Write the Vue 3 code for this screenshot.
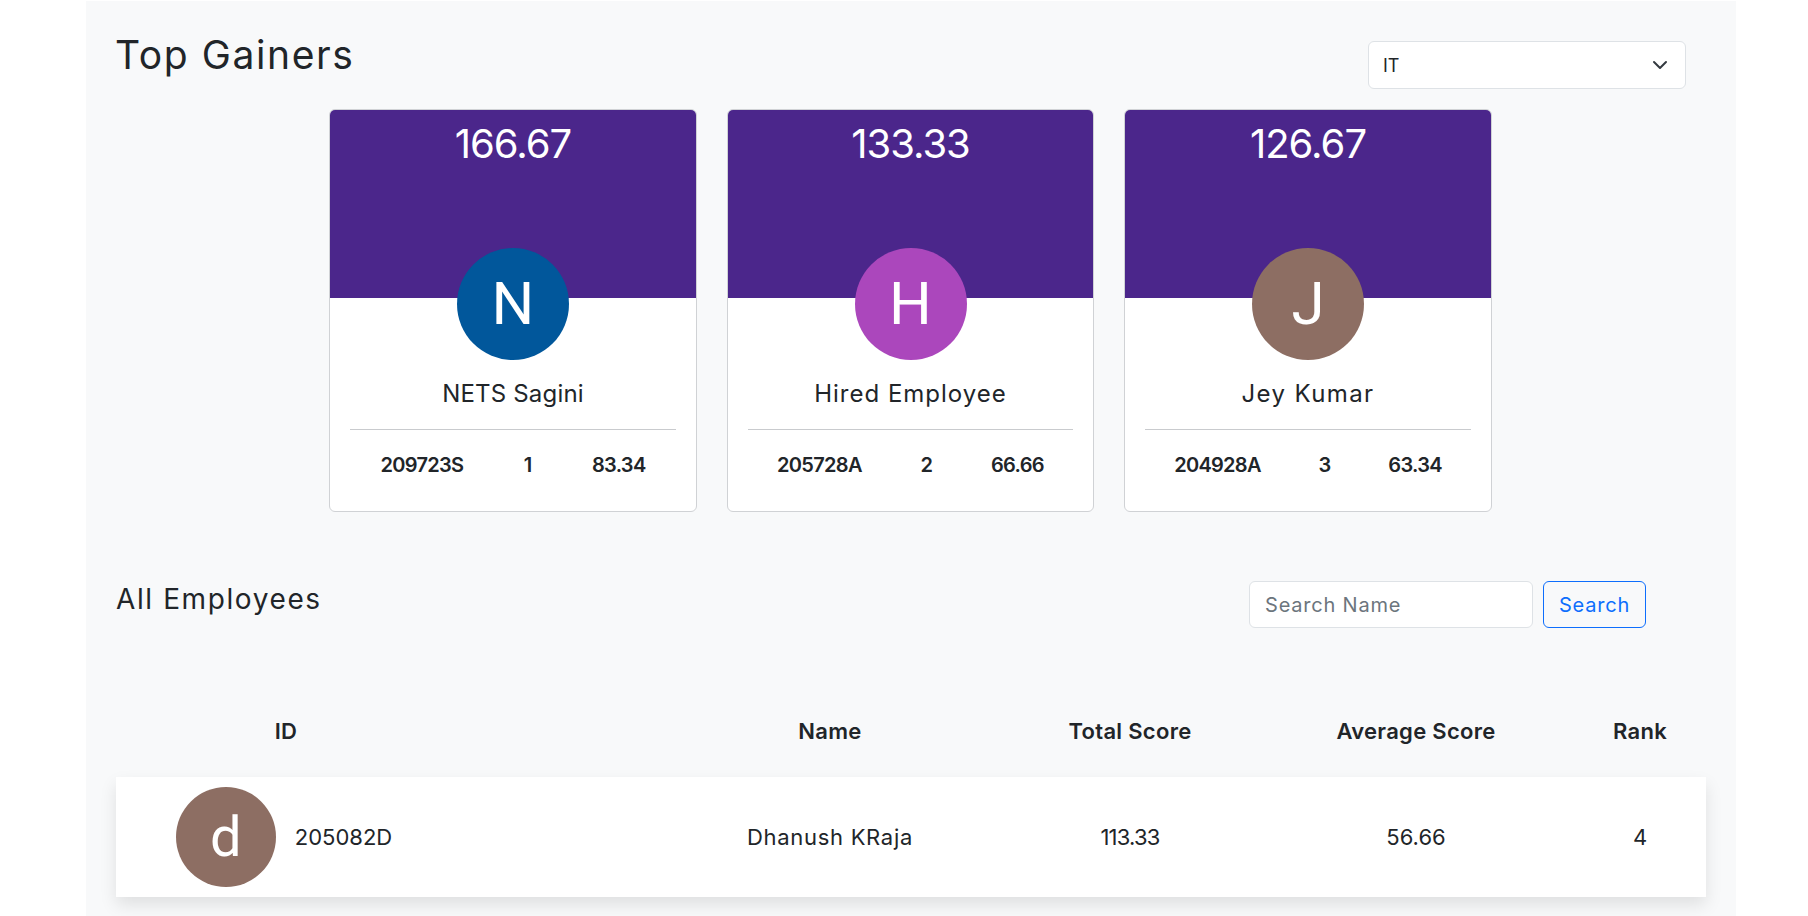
<script setup>
const gainers = [
  { score: '166.67', letter: 'N', color: '#01579b', name: 'NETS Sagini', id: '209723S', rank: 1, avg: '83.34' },
  { score: '133.33', letter: 'H', color: '#ab47bc', name: 'Hired Employee', id: '205728A', rank: 2, avg: '66.66' },
  { score: '126.67', letter: 'J', color: '#8d6e63', name: 'Jey Kumar', id: '204928A', rank: 3, avg: '63.34' },
]
</script>

<template>
  <main class="panel">
    <header class="top-head">
      <h1 class="title">Top Gainers</h1>
      <div class="select-wrap">
        <select class="select"><option>IT</option></select>
        <svg class="chev" viewBox="0 0 16 16" width="16" height="16" fill="none" stroke="#343a40" stroke-width="2" stroke-linecap="round" stroke-linejoin="round"><path d="m2 5 6 6 6-6" /></svg>
      </div>
    </header>

    <section class="cards">
      <article v-for="g in gainers" :key="g.id" class="card">
        <div class="card-top"><span class="score">{{ g.score }}</span></div>
        <div class="big-avatar" :style="{ background: g.color }">{{ g.letter }}</div>
        <div class="card-body">
          <div class="card-name">{{ g.name }}</div>
          <div class="stats">
            <span>{{ g.id }}</span>
            <span>{{ g.rank }}</span>
            <span>{{ g.avg }}</span>
          </div>
        </div>
      </article>
    </section>

    <section class="emp-head">
      <h2 class="subtitle">All Employees</h2>
      <form class="search" @submit.prevent>
        <input class="search-input" placeholder="Search Name" />
        <button class="search-btn" type="button">Search</button>
      </form>
    </section>

    <div class="grid thead">
      <div class="id-cell">ID</div>
      <div>Name</div>
      <div>Total Score</div>
      <div>Average Score</div>
      <div>Rank</div>
    </div>
    <div class="grid trow">
      <div class="id-cell person">
        <div class="small-avatar">d</div>
        <span>205082D</span>
      </div>
      <div class="emp-name">Dhanush KRaja</div>
      <div class="emp-total">113.33</div>
      <div>56.66</div>
      <div>4</div>
    </div>
  </main>
</template>

<style>
html, body { margin: 0; background: #fff; overflow: hidden; }
</style>

<style scoped>
.panel {
  box-sizing: border-box;
  width: 1650px;
  height: 915px;
  margin: 1px 0 0 86px;
  padding: 0 30px;
  background: #f8f9fa;
  color: #212529;
  font-family: Inter, "Open Sans", sans-serif;
  overflow: hidden;
}
.top-head {
  display: flex;
  justify-content: space-between;
  align-items: flex-start;
  height: 107.5px;
  padding-right: 20px;
}
.title {
  margin: 0 0 0 -1px;
  padding-top: 30px;
  font-size: 39px;
  line-height: 48px;
  font-weight: 400;
  letter-spacing: 1.6px;
}
.select-wrap { position: relative; margin-top: 40px; }
.select {
  display: block;
  box-sizing: border-box;
  width: 318px;
  height: 48px;
  padding: 0 14px;
  appearance: none;
  background: #fff;
  border: 1px solid #dee2e6;
  border-radius: 6px;
  font: 400 18px Inter, sans-serif;
  color: #212529;
}
.chev { position: absolute; right: 18px; top: 16px; pointer-events: none; }

.cards { display: flex; justify-content: center; gap: 30px; margin-right: 1px; }
.card {
  position: relative;
  box-sizing: border-box;
  width: 367.5px;
  height: 403px;
  background: #fff;
  border: 1px solid #d0d2d5;
  border-radius: 6px;
  overflow: hidden;
}
.card-top {
  height: 188px;
  background: #4b268b;
  color: #fff;
  text-align: center;
  padding-top: 10px;
  box-sizing: border-box;
}
.score { font-size: 40px; line-height: 48px; letter-spacing: -1px; }
.big-avatar {
  position: absolute;
  left: 50%;
  top: 138px;
  width: 112px;
  height: 112px;
  margin-left: -56px;
  border-radius: 50%;
  display: flex;
  align-items: center;
  justify-content: center;
  color: #fff;
  font: 400 60px Roboto, sans-serif;
}
.card-body { padding: 0 20px; }
.card-name {
  padding-top: 78px;
  height: 136.5px;
  box-sizing: border-box;
  text-align: center;
  font-size: 24px;
  line-height: 36px;
  letter-spacing: 1px;
}
.card:nth-child(1) .card-name { letter-spacing: 0.2px; }
.card:nth-child(3) .card-name { letter-spacing: 1.4px; }
.stats {
  display: flex;
  justify-content: space-around;
  align-items: center;
  border-top: 1px solid #c9cbce;
  margin-top: -5px;
  padding-top: 20px;
  font-size: 20px;
  line-height: 30px;
  font-weight: 600;
  letter-spacing: -0.7px;
}

.emp-head {
  display: flex;
  justify-content: space-between;
  align-items: flex-start;
  margin-top: 69px;
  height: 120px;
  padding-right: 60px;
}
.subtitle {
  margin: -3px 0 0;
  font-size: 28px;
  line-height: 42px;
  font-weight: 400;
  letter-spacing: 1.6px;
}
.search { display: flex; gap: 10px; }
.search-input {
  box-sizing: border-box;
  width: 284px;
  height: 47px;
  padding: 2px 15px 0;
  background: #fff;
  border: 1px solid #dee2e6;
  border-radius: 6px;
  font: 400 20px Inter, sans-serif;
  letter-spacing: 0.8px;
  color: #212529;
}
.search-input::placeholder { color: #6c757d; opacity: 1; }
.search-btn {
  box-sizing: border-box;
  width: 103px;
  height: 47px;
  padding: 2px 0 0;
  background: transparent;
  border: 1px solid #0d6efd;
  border-radius: 6px;
  color: #0d6efd;
  font: 400 20px Inter, sans-serif;
  letter-spacing: 0.8px;
}

.grid {
  display: grid;
  grid-template-columns: 542px 344px 256px 316px 132px;
  align-items: center;
  text-align: center;
}
.id-cell { width: 340px; }
.thead {
  height: 60px;
  padding-bottom: 16px;
  font-size: 22px;
  font-weight: 600;
  letter-spacing: 0.3px;
}
.trow {
  height: 120px;
  background: #fff;
  box-shadow: 0 8px 16px rgba(0, 0, 0, 0.1);
  font-size: 22px;
}
.emp-name { letter-spacing: 0.7px; }
.emp-total { letter-spacing: -0.8px; }
.person {
  display: flex;
  align-items: center;
  justify-content: center;
  gap: 19px;
  margin-left: -2px;
}
.small-avatar {
  width: 100px;
  height: 100px;
  border-radius: 50%;
  background: #8d6e63;
  color: #fff;
  display: flex;
  align-items: center;
  justify-content: center;
  font: 400 56px Roboto, sans-serif;
}
</style>
